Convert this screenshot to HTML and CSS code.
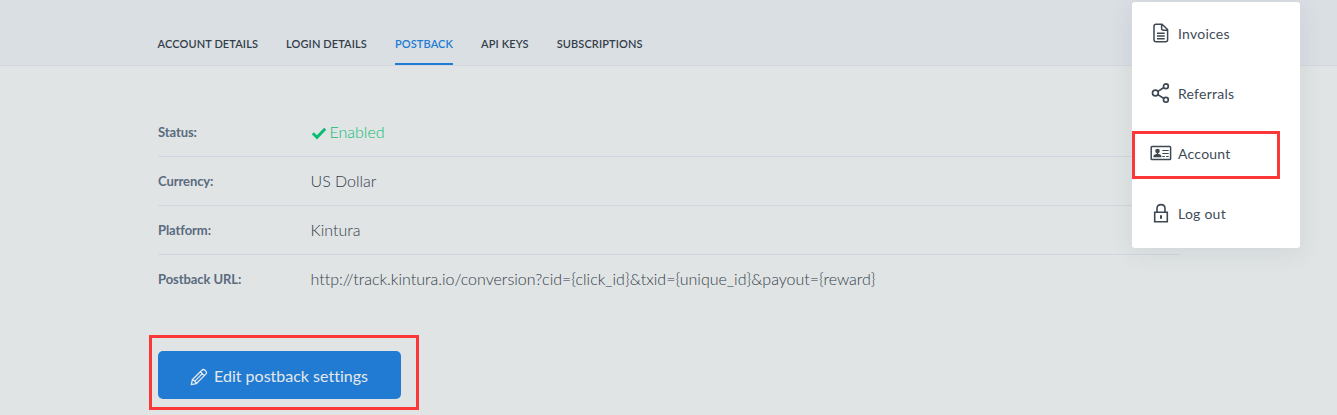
FILE: index.html
```html
<!DOCTYPE html>
<html lang="en">
<head>
<meta charset="utf-8">
<title>Postback</title>
<link rel="stylesheet" href="styles.css">
</head>
<body>
<header class="topbar">
  <nav class="tabs">
    <a class="tab">ACCOUNT DETAILS</a>
    <a class="tab">LOGIN DETAILS</a>
    <a class="tab active">POSTBACK</a>
    <a class="tab">API KEYS</a>
    <a class="tab">SUBSCRIPTIONS</a>
  </nav>
</header>
<main class="content">
  <dl class="details">
    <div class="row"><dt>Status:</dt><dd class="enabled"><svg class="check" width="16" height="14" viewBox="0 0 16 14"><path d="M1.8 7.2 6 11.3 14.2 2.8" fill="none" stroke="currentColor" stroke-width="3"/></svg><span>Enabled</span></dd></div>
    <div class="row"><dt>Currency:</dt><dd><span>US Dollar</span></dd></div>
    <div class="row"><dt>Platform:</dt><dd><span>Kintura</span></dd></div>
    <div class="row"><dt>Postback URL:</dt><dd><span>http://track.kintura.io/conversion?cid={click_id}&amp;txid={unique_id}&amp;payout={reward}</span></dd></div>
  </dl>
  <div class="mark mark-button">
    <button class="edit">
      <svg width="18" height="18" viewBox="0 0 18 18" fill="none" stroke="currentColor" stroke-width="1.3" stroke-linejoin="round" stroke-linecap="round"><path d="M1.3 16.7 2.3 11.8 11.9 2.2Q13.4.8 15 2.3L15.8 3.1Q17.2 4.6 15.8 6.1L6.2 15.7ZM10.4 3.7 14.3 7.6M5.6 12.4 12.2 5.8M2.3 11.8Q5.4 12.2 6.2 15.7"/></svg>
      <span>Edit postback settings</span>
    </button>
  </div>
</main>
<aside class="menu">
  <a class="item"><svg width="22" height="22" viewBox="0 0 22 22" fill="none" stroke="currentColor" stroke-width="1.5"><path d="M6 2.2H12L17.6 7.5V17.8Q17.6 19.8 15.6 19.8H6Q4 19.8 4 17.8V4.2Q4 2.2 6 2.2ZM11.6 2.5V6.2Q11.6 8.2 13.6 8.2H17M7 11.2H14.7M7 14H14.7M7 16.8H14.7"/></svg><span>Invoices</span></a>
  <a class="item"><svg width="22" height="22" viewBox="0 0 22 22" fill="none" stroke="currentColor" stroke-width="1.7"><circle cx="5.4" cy="11" r="2.9"/><circle cx="15.9" cy="4.2" r="2.4"/><circle cx="15.9" cy="17.8" r="2.4"/><path d="M7.9 9.4 13.9 5.5M7.9 12.6 13.9 16.5"/></svg><span>Referrals</span></a>
  <a class="item"><svg width="22" height="22" viewBox="0 0 22 22" fill="none" stroke="currentColor" stroke-width="1.5"><rect x="1.2" y="4.6" width="19.4" height="13" rx=".8"/><circle cx="7.5" cy="9" r="2.3" fill="currentColor" stroke="none"/><path d="M3.4 15.2V13.7Q4.5 12 6.4 12L7.5 10.5 8.6 12Q10.5 12 11.4 13.7V15.2Z" fill="currentColor" stroke="none"/><path d="M12.3 8.5H18.7M12.3 11.5H18.7M12.3 14.5H14.8M16.1 14.5H18.7" stroke-width="1.2"/></svg><span>Account</span></a>
  <a class="item"><svg width="22" height="22" viewBox="0 0 22 22" fill="none" stroke="currentColor" stroke-width="1.6"><path d="M4.7 10.2H17.3V19.8H4.7ZM7 10.2V6.6Q7 2.6 11 2.6T15 6.6V10.2"/><path d="M11 13.2V16.8" stroke-width="2"/></svg><span>Log out</span></a>
  <div class="mark mark-account"></div>
</aside>
</body>
</html>
```
FILE: styles.css
```css
* { box-sizing: border-box; }
body { margin: 0; height: 415px; overflow: hidden; background: #e0e4e5; font-family: Lato, sans-serif; font-variant-ligatures: none; color: #343e49; position: relative; }
.topbar { height: 66px; background: #dadfe4; border-bottom: 1px solid #d2d8de; padding-left: 157.5px; }
.tabs { display: flex; gap: 28px; height: 65px; }
.tab { height: 65px; padding-top: 36px; font-size: 11px; line-height: 16px; font-weight: 600; letter-spacing: .11px; white-space: nowrap; border-bottom: 2px solid transparent; }
.active { color: #217bd3; border-bottom-color: #217bd3; }
.content { padding: 42px 0 0 158px; }
.details { margin: 0; width: 1023px; }
.row { display: flex; align-items: center; height: 49px; border-bottom: 1px solid #d0d7e0; }
.row:last-child { border-bottom: 0; }
dt { width: 152.5px; font-size: 13px; font-weight: 700; letter-spacing: -.08px; color: #5a6b7e; }
dd { margin: 0; display: flex; align-items: center; font-size: 16px; font-weight: 300; padding-bottom: 2px; }
.row:last-child dt { padding-bottom: 1px; }
.enabled { color: #0bbd73; gap: 3px; }
.check { margin-top: 3px; }
.mark { border: 3px solid #fc3737; }
.mark-button { width: 270px; height: 75px; margin: 31px 0 0 -9px; padding: 13px 6px; }
.edit { display: flex; align-items: center; justify-content: center; gap: 6px; width: 243px; height: 48px; padding: 0 1px 0 0; border: 0; border-radius: 5px; background: #217bd3; color: #e5e9ec; font: 400 16px Lato, sans-serif; font-variant-ligatures: none; }
.edit svg { margin-top: 3px; }
.menu { position: absolute; left: 1132px; top: 2px; width: 168px; height: 246px; padding-top: 2px; background: #fff; border-radius: 3px; box-shadow: 0 3px 24px rgba(50, 65, 80, .1); }
.item { display: flex; align-items: center; gap: 6px; height: 60px; padding-left: 18px; font-size: 14px; letter-spacing: .24px; color: #414b57; }
.item svg { margin-top: -2px; color: #3d4853; }
.item span { padding-bottom: 2px; }
.mark-account { position: absolute; left: 0; top: 129px; width: 148px; height: 48px; }
```
